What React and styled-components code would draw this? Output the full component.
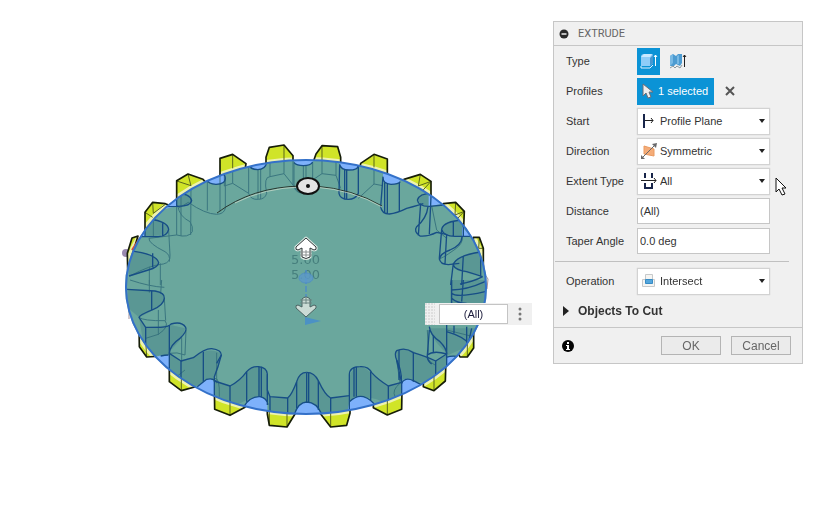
import React from "react";
import styled, { createGlobalStyle } from "styled-components";

const GlobalStyle = createGlobalStyle`
  *, *::before, *::after { box-sizing: border-box; }
  body { margin: 0; background: #fff; }
  body, button, input, select { font-family: "Liberation Sans", Arial, sans-serif; font-size: 11px; color: #333; }
`;

const Workspace = styled.main`
  display: flex;
  align-items: flex-start;
  min-height: 100vh;
  padding-right: 21px;
`;

const Scene = styled.section`
  position: relative;
  flex: 1;
  min-width: 0;
`;

const Drawing = styled.svg`
  display: block;
  width: 100%;
  height: auto;
`;

const ValueBox = styled.div`
  position: absolute;
  left: 425px;
  top: 303px;
  display: flex;
  align-items: center;
  width: 107px;
  height: 22px;
  background: #f0f0f0;
`;

const Grip = styled.span`
  width: 14px;
  height: 22px;
  background: radial-gradient(circle at 1px 1px, #dedede 1px, transparent 1px) 0 0 / 3px 3px;
  border-right: 4px solid #f0f0f0;
`;

const ValueInput = styled.input`
  width: 69px;
  height: 20px;
  padding: 0;
  border: 1px solid #c4c4c4;
  background: #fff;
  text-align: center;
  font-size: 11px;
  color: #1c1c3c;
`;

const MoreButton = styled.button`
  display: flex;
  flex: 1;
  justify-content: center;
  padding: 0;
  border: 0;
  background: none;
`;

const Dialog = styled.form`
  position: relative;
  width: 250px;
  margin-top: 21px;
  border: 1px solid #c6c6c6;
  background: #f0f0f0;
`;

const Header = styled.header`
  display: flex;
  align-items: center;
  gap: 9px;
  height: 24px;
  padding-left: 5px;
  border-bottom: 1px solid #c6c6c6;
`;

const Title = styled.h1`
  margin: 0;
  font-size: 11px;
  font-weight: 400;
  color: #666;
  font-family: Roboto, "Liberation Sans", sans-serif;
`;

const IconButton = styled.button`
  display: flex;
  padding: 0;
  border: 0;
  background: none;
`;

const Row = styled.div`
  display: grid;
  grid-template-columns: 71px 133px;
  align-items: center;
  height: 30px;
  padding-left: 12px;
`;

const Label = styled.label`
  white-space: nowrap;
`;

const Controls = styled.div`
  display: flex;
  align-items: center;
  gap: 6px;
`;

const TypeButton = styled.button`
  display: flex;
  align-items: center;
  justify-content: center;
  width: 23px;
  height: 27px;
  padding: 0;
  border: 0;
  background: ${(p) => (p.$active ? "#0b93d6" : "transparent")};
`;

const SelectionButton = styled.button`
  display: flex;
  align-items: center;
  gap: 4px;
  width: 77px;
  height: 27px;
  padding: 0 0 0 5px;
  border: 0;
  background: #0b93d6;
  color: #fff;
  white-space: nowrap;
`;

const SelectFrame = styled.div`
  position: relative;
  display: flex;
  align-items: center;
  gap: 3px;
  height: 27px;
  padding: 0 4px 0 3px;
  border: 1px solid #d2d2d2;
  background: #fff;
  box-shadow: 0 0 1px #c8c8c8;
`;

const Select = styled.select`
  flex: 1;
  min-width: 0;
  height: 24px;
  padding: 0;
  border: 0;
  outline: 0;
  appearance: none;
  background: transparent;
`;

const TextInput = styled.input`
  width: 100%;
  height: 26px;
  padding: 0 2px;
  border: 1px solid #c6c6c6;
  background: #fff;
`;

const Divider = styled.hr`
  height: 1px;
  margin: 5px 13px 4px 1px;
  border: 0;
  background: #c0c0c0;
`;

const SectionButton = styled.button`
  display: flex;
  align-items: center;
  gap: 8px;
  height: 31px;
  padding: 0 0 2px 9px;
  border: 0;
  background: none;
  font-size: 12px;
  font-weight: 700;
`;

const Footer = styled.footer`
  display: flex;
  align-items: center;
  gap: 10px;
  height: 36px;
  padding: 0 11px 0 8px;
  border-top: 1px solid #c6c6c6;
`;

const Spacer = styled.span`
  flex: 1;
`;

const ActionButton = styled.button`
  width: 60px;
  height: 19px;
  padding: 0;
  border: 1px solid #b4b4b4;
  background: #ebebeb;
  color: #666;
  font-size: 12px;
`;

const Pointer = styled.svg`
  position: absolute;
  left: 221px;
  top: 155px;
`;

/* Each sector is drawn at three units per pixel from its own origin. */
const sectors = [
  {
    at: "translate(110 130) scale(.33333)",
    teeth: [
      "M468 100L468 82L478 52L522 45L549 77V100Z",
      "M330 145V85L368 73L408 101L405 120Z",
      "M200 215V152L234 132L279 148L290 160Z",
      "M105 310V247L128 217L166 221L190 230Z",
      "M53 420L52 370L66 324L84 318Z",
    ],
    edges: ["M522 45V90", "M368 73V115", "M234 132L243 168M200 153L243 167", "M128 217L130 250L166 223M105 247L128 262"],
    patches: [
      "M416 102A27 17 0 0 0 470 98L470 85H416Z",
      "M290 147A28 17 0 0 0 346 145V120Z",
      "M160 238L200 200V229Z",
      "M75 319L105 285V319Z",
    ],
    faces: [
      "M200 190Q245 190 245 212Q240 230 200 228Z",
      "M115 268Q172 275 176 298Q170 320 105 319V290Z",
      "M58 362Q142 375 146 398Q135 415 57 438Z",
    ],
    faint: [
      "M480 90V140L522 131V90M522 131L549 165V90M549 165Q560 188 600 190M480 140Q460 140 470 190Q465 208 445 208Q422 210 416 190L368 160L343 168V85M368 160V110M416 190V105M444 118V207M452 118V207",
      "M346 145V235Q342 252 320 253Q285 252 235 217L205 235M292 150V242M330 135V245M243 168L242 315M203 226Q208 260 240 275Q250 290 247 305Q235 325 200 315L117 325",
      "M130 265V320M176 300L180 375Q182 397 160 402Q120 405 60 438M117 325Q115 340 165 365Q182 375 178 395M151 400V465M118 410V465M200 315V225M213 195V318",
    ],
    blue: [
      "M416 102Q420 119 443 119Q466 119 470 98M290 148Q295 163 318 163Q346 163 346 145Q346 130 330 133V85",
      "M200 190Q240 190 245 212Q242 230 200 229L165 230M200 152V230M118 267Q173 274 176 298Q172 318 145 320H80M105 255V318M58 362Q140 372 146 398Q145 412 115 420L57 438M128 370V412M158 280V318",
    ],
  },
  {
    at: "translate(300 130) scale(.33333)",
    teeth: [
      "M40 95L48 72L66 47L113 50L122 82V105Z",
      "M180 112L182 100L222 73L262 87V140Z",
      "M310 160L312 148L361 133L393 154V220Z",
      "M430 235V221L467 217L493 244L490 315Z",
      "M520 335V322H538L550 355V410Z",
    ],
    edges: ["M66 47V90", "M222 73V112", "M361 133L355 168L393 154M393 154L365 185", "M467 217L465 255L493 244L470 268", "M538 322L536 355L550 355"],
    patches: [
      "M-18 94Q-10 108 10 108Q32 108 38 94V85H-18Z",
      "M119 103Q122 121 147 121Q174 121 175 108V90H119Z",
      "M249 140Q248 163 273 163Q296 163 301 155L290 130H249Z",
      "M386 196L425 222L386 229Z",
      "M486 290L510 318H486Z",
    ],
    faces: [
      "M352 210Q355 190 395 190V228Q360 230 352 210Z",
      "M425 298Q428 275 490 270V319Q430 320 425 298Z",
      "M460 405Q465 380 542 366V435Q465 425 460 405Z",
    ],
    faint: [
      "M-18 95V160Q-20 185 5 190M10 108V155M18 108V155M38 98V150L66 131V90M66 131L108 136L122 175M108 50V136M222 112V162M175 205L222 162L248 167",
      "M395 228L410 300L440 325M487 320Q490 340 465 358Q420 390 418 385",
    ],
    blue: [
      "M-18 98Q-10 107 10 107Q32 107 38 96M119 103Q122 120 147 120Q174 120 174 108M119 103L117 190Q120 208 145 208Q166 208 175 190V108M134 118V207M140 118V207",
      "M249 140Q248 162 273 163Q296 163 301 155M249 140L242 230Q245 252 268 252Q290 250 320 235Q360 225 370 221M254 158V248M262 160V250M298 157V243",
      "M352 210Q358 190 395 190M352 210Q355 230 390 229L430 225M384 230Q380 265 350 290Q340 305 360 318Q385 320 410 307L442 314M362 220L355 317M395 155L388 312",
      "M425 298Q430 273 492 270M425 298Q430 318 465 319H510M425 298L418 385Q420 403 445 404L478 400M440 312L435 402M460 275V319M486 320Q485 345 450 360Q420 370 418 390M490 245V318",
      "M460 405Q465 378 542 366M460 405Q465 420 500 425L548 440M460 400L452 465M490 377L485 465M548 440Q520 455 480 462M542 330V440",
    ],
  },
  {
    at: "translate(110 280) scale(.33333)",
    teeth: [
      "M87 130L88 200L110 231L160 228V160Z",
      "M178 235V305L214 332L265 318V250Z",
      "M313 320L314 388L360 406L405 382V320Z",
      "M472 370V402L478 436L531 441L555 402V370Z",
    ],
    edges: ["M107 180L110 231", "M214 270V332", "M360 350V406", "M478 390V436M531 390V441"],
    patches: [
      "M135 232Q150 225 178 225V265Z",
      "M255 325L290 298Q310 293 313 310V355Z",
      "M395 390Q420 346 452 350Q472 356 472 374V410Z",
    ],
    faces: [
      "M55 28L135 33Q165 40 163 55Q150 85 87 112L50 80Z",
      "M87 112L107 142L183 135L225 145Q225 170 178 215V225L107 230Z",
      "M178 220L213 243L260 226Q300 200 332 220Q330 250 313 300L213 332L178 300Z",
      "M313 303L360 318Q390 300 410 275Q430 255 460 262Q475 280 474 340V375Q440 340 410 360L360 385L313 365Z",
      "M474 340L480 350L533 354Q550 340 558 310Q565 278 590 277V365Q565 370 550 400H476Z",
    ],
    faint: [
      "M118 0V38M155 0L152 40M60 0Q120 20 163 22M145 90V165M163 55L167 122M87 112Q100 123 165 122Q180 140 145 163L107 175",
      "M178 220Q200 215 225 225L228 150M215 170V245M190 300Q205 285 225 270",
      "M313 295Q330 290 328 350M320 218V310",
    ],
    blue: [
      "M50 28L135 33Q165 38 163 55Q160 75 130 88Q88 105 87 112L107 142L152 142Q178 140 183 132Q215 123 227 142Q233 153 210 175Q180 195 178 220L213 243L250 233Q285 205 305 206Q335 210 334 225Q325 260 313 290V303L360 318Q390 303 410 275Q425 258 445 260Q470 262 472 282V330L480 350L533 354Q545 345 560 305Q568 277 590 277",
      "M107 142V230M178 135V225M125 33V90M178 220V305M213 243V332M280 215V305M334 225L320 250M313 303V390M360 318V400M410 275V365M447 260V348M454 260V350M472 282V375M480 350V430M533 354V410M560 305V385M262 320L290 298Q310 293 318 305M400 382Q420 348 450 350Q470 354 474 374M152 228Q165 225 175 225",
    ],
  },
  {
    at: "translate(300 280) scale(.33333)",
    teeth: [
      "M55 390L62 402L92 441L140 436L150 400V370Z",
      "M220 350V383L262 405L305 388L306 330Z",
      "M370 300V320L402 332L436 303L438 235Z",
      "M470 210L480 231H502L521 204V160Z",
    ],
    edges: ["M92 390V441", "M262 360V405", "M402 280V332", "M502 190V231"],
    patches: [
      "M-22 415Q-8 367 20 366Q50 367 65 410Z",
      "M140 405L148 368Q165 345 190 350Q215 358 238 385Z",
      "M304 358V305Q315 290 335 300L385 322Z",
      "M438 270V230Q450 225 490 234Z",
    ],
    faces: [
      "M20 277Q45 277 60 305Q75 340 92 354L145 348V400H65Q50 367 20 366Z",
      "M148 290Q155 260 190 260Q215 280 235 295L265 318L305 305L304 385L262 375Q215 340 150 360Z",
      "M285 215Q315 195 350 220L407 243L440 225V280L380 310L310 300Z",
      "M388 145H525L500 200L445 225Q395 180 388 145Z",
      "M450 0H560V70H450Z",
    ],
    faint: [
      "M290 240L300 310Q275 330 285 350M382 150L385 215Q375 240 405 255M440 150Q480 160 520 170",
    ],
    blue: [
      "M20 277Q43 277 55 302Q75 345 92 354L148 347V285Q148 260 180 260Q205 258 215 278Q235 300 265 318L305 307Q305 270 290 240Q282 220 290 212Q315 200 340 218Q380 230 407 243L440 222Q440 205 420 185Q390 165 388 140",
      "M92 354V435M148 345V405M55 302V390M20 278V367M26 279V368M162 262V350M169 260V350M212 275V360M265 318V395M305 307V385M290 240L305 310M297 210V300M340 218V305M407 243V325M440 135V280M388 150L382 225Q380 240 395 252M400 165V220M382 225Q400 210 440 222M462 137V160M440 155Q490 170 505 190L515 145M500 140V190M438 232Q460 225 480 231",
      "M455 0V70M490 0L485 65M455 30Q500 30 555 5M455 40Q470 55 555 35M455 55Q470 70 500 70M-18 405Q-5 367 20 366Q50 367 65 402M148 365Q170 345 190 350Q215 358 230 382M305 310Q315 290 340 302L375 320",
    ],
  },
];

const paths = (list) => list.map((d) => <path key={d} d={d} />);

const upArrow = "M306 238L316 247Q317 250 314 250L310 248V257Q306 260 302 257V248L298 250Q295 250 296 247Z";
const downArrow = "M306 317L316 308Q317 305 314 305L310 307V299Q306 295 302 299V307L298 305Q295 305 296 308Z";

function GearDrawing() {
  const layer = (key) =>
    sectors.map((s) => (
      <g key={s.at} transform={s.at}>
        {paths(s[key])}
      </g>
    ));
  return (
    <Drawing viewBox="0 0 553 506" role="img" aria-label="Gear body with extrude preview">
      <defs>
        <clipPath id="disc">
          <ellipse cx="306" cy="287" rx="180" ry="127" />
        </clipPath>
        <clipPath id="teeth">
          {sectors.flatMap((s) => s.teeth.map((d) => <path key={s.at + d} d={d} transform={s.at} />))}
        </clipPath>
      </defs>
      <circle cx="126" cy="253" r="4" fill="#806b9c" opacity=".8" />
      <g fill="#d0e428">{layer("teeth")}</g>
      <ellipse cx="306" cy="287" rx="182" ry="128" fill="none" stroke="#eef2b0" strokeWidth="4" clipPath="url(#teeth)" />
      <g fill="none" stroke="#59661c" strokeWidth="3">{layer("edges")}</g>
      <g fill="none" stroke="#161d08" strokeWidth="5" strokeLinejoin="round">{layer("teeth")}</g>
      <path d="M132 250l8-12" stroke="#d8453a" strokeWidth="2" />
      <path d="M486 276l2 3-1 10M129 285v34" stroke="#a7929a" strokeWidth="1" fill="none" />
      <ellipse cx="306" cy="287" rx="181" ry="127" fill="#6aa79d" />
      <g clipPath="url(#disc)">
        <g fill="#457f87" opacity=".4">{layer("faces")}</g>
        <g fill="#7eb1fb">{layer("patches")}</g>
        <g fill="none" stroke="#35707c" strokeWidth="3" opacity=".9">{layer("faint")}</g>
        <g fill="none" stroke="#174e86" strokeWidth="4" strokeLinejoin="round">{layer("blue")}</g>
      </g>
      <ellipse cx="306" cy="287" rx="180" ry="127" fill="none" stroke="#3471c9" strokeWidth="2" />

      <path d="M217 213Q252 187 301 186" fill="none" stroke="#29372f" strokeWidth="1" />
      <path d="M315 186Q353 189 382 206" fill="none" stroke="#29372f" strokeWidth="1" />
      <path d="M235 203Q264 188 301 187M315 187Q353 190 382 207" fill="none" stroke="#e2e8d5" strokeWidth="1" opacity=".6" />
      <ellipse cx="308" cy="186" rx="11" ry="8" fill="#e5e5e5" stroke="#111" strokeWidth="2" />
      <circle cx="308" cy="186" r="2" fill="#111" />

      <g fill="#467f7d" fontFamily="DejaVu Sans" fontSize="13">
        <text x="291" y="264">5.00</text>
        <text x="291" y="279">5.00</text>
      </g>
      <path d="M306 270V303" stroke="#4d8bc8" strokeWidth="2" strokeDasharray="6 2" opacity=".7" />
      <ellipse cx="306" cy="278" rx="7" ry="5" fill="#5c99cb" stroke="#4d8bc8" opacity=".8" />
      <path d="M305 317L321 321L305 325Z" fill="#4b91c5" />
      <g strokeLinejoin="round">
        <path d={upArrow} fill="none" stroke="#d9e6e0" strokeWidth="3" />
        <path d={upArrow} fill="#fff" stroke="#30383a" />
        <path d="M300 252H312M300 255H312M306 250V257" fill="none" stroke="#8a9090" />
        <path d={downArrow} fill="#cadbd5" stroke="#4b6362" />
        <path d="M300 300H312M300 303H312M306 298V304" fill="none" stroke="#6d8582" />
      </g>
    </Drawing>
  );
}

const Arrow = () => (
  <svg width="6" height="4" viewBox="0 0 6 4" aria-hidden="true">
    <path d="M0 0H6L3 4Z" fill="#222" />
  </svg>
);

const CursorShape = ({ width, fill, stroke }) => (
  <svg width={width} height="17" viewBox="0 0 12 17" aria-hidden="true">
    <path d="M1 1V13L4 10L6 15L9 14L7 9H11Z" fill={fill} stroke={stroke} />
  </svg>
);

const ExtrudeIcon = () => (
  <svg width="19" height="19" viewBox="0 0 19 19" aria-hidden="true">
    <path d="M2 5Q2 2 5 2H13Q14 2 14 4V11L11 14H2Z" fill="#8fcdf8" />
    <path d="M11 6L14 3V11L11 14Z" fill="#4697d1" />
    <path d="M2 5L5 2H13L11 5Z" fill="#c9e9ff" />
    <path d="M2 14V16H11L14 13" fill="none" stroke="#dff2ff" />
    <path d="M16.5 14V3M15 5L16.5 3L18 5" fill="none" stroke="#fff" />
  </svg>
);

const ThinIcon = () => (
  <svg width="19" height="19" viewBox="0 0 19 19" aria-hidden="true">
    <path d="M2 4L5 2L8 4L10 2H14V11L12 14L8 12L6 14H2Z" fill="#4c9bd1" />
    <path d="M2 4L5 2V11L2 14ZM9 4L11 3V12L9 12Z" fill="#78b9e4" />
    <path d="M2 16L5 14L7 16L9 14L12 16L14 13" fill="none" stroke="#8b989f" />
    <path d="M16.5 15V3M15 5L16.5 3L18 5" fill="none" stroke="#202020" />
  </svg>
);

const PlaneIcon = () => (
  <svg width="16" height="18" viewBox="0 0 16 18" aria-hidden="true">
    <path d="M3 2V16" stroke="#18254a" strokeWidth="2" />
    <path d="M4 8.5H12M10 6L12 8.5L10 11" fill="none" stroke="#222" />
  </svg>
);

const SymmetricIcon = () => (
  <svg width="16" height="18" viewBox="0 0 16 18" aria-hidden="true">
    <path d="M3 4L13 7V14L3 12Z" fill="#f5ac78" stroke="#e99a61" />
    <path d="M1 16L15 2" fill="none" stroke="#68696b" strokeWidth="1" />
    <path d="M11 2L16 1L15 6ZM0 13V17H4Z" fill="#68696b" />
  </svg>
);

const ThroughIcon = () => (
  <svg width="16" height="18" viewBox="0 0 16 18" aria-hidden="true">
    <path d="M4 1V6M11 1V6M4 11V16H11V11" fill="none" stroke="#18254a" strokeWidth="2" />
    <path d="M0 8.5H15M13 6L15 8.5L13 11" fill="none" stroke="#222" />
  </svg>
);

const IntersectIcon = () => (
  <svg width="16" height="18" viewBox="0 0 16 18" aria-hidden="true">
    <path d="M4.5 2.5H11.5V7.5H4.5ZM1.5 7.5H13.5V14.5H1.5Z" fill="#f5f5f3" stroke="#c7c9ca" />
    <path d="M4.5 7.5H11.5V11.5H4.5Z" fill="#54a6dc" stroke="#368bc5" />
  </svg>
);

function SelectRow({ id, label, value, children }) {
  return (
    <Row>
      <Label htmlFor={id}>{label}</Label>
      <SelectFrame>
        {children}
        <Select id={id} defaultValue={value}>
          <option>{value}</option>
        </Select>
        <Arrow />
      </SelectFrame>
    </Row>
  );
}

function TextRow({ id, label, value }) {
  return (
    <Row>
      <Label htmlFor={id}>{label}</Label>
      <TextInput id={id} defaultValue={value} />
    </Row>
  );
}

export default function App() {
  return (
    <>
      <GlobalStyle />
      <Workspace>
        <Scene>
          <GearDrawing />
          <ValueBox>
            <Grip />
            <ValueInput aria-label="Extent value" defaultValue="(All)" />
            <MoreButton type="button" aria-label="More options">
              <svg width="4" height="14" viewBox="0 0 4 14" fill="#777">
                <circle cx="2" cy="2" r="1.5" />
                <circle cx="2" cy="7" r="1.5" />
                <circle cx="2" cy="12" r="1.5" />
              </svg>
            </MoreButton>
          </ValueBox>
        </Scene>
        <Dialog onSubmit={(e) => e.preventDefault()}>
          <Header>
            <IconButton type="button" aria-label="Collapse">
              <svg width="10" height="10" viewBox="0 0 10 10">
                <circle cx="5" cy="5" r="4.5" fill="#292929" />
                <path d="M2.5 5H7.5" stroke="#eee" strokeWidth="1.5" />
              </svg>
            </IconButton>
            <Title>EXTRUDE</Title>
          </Header>
          <Row>
            <Label as="span">Type</Label>
            <Controls>
              <TypeButton type="button" $active aria-label="Extrude"><ExtrudeIcon /></TypeButton>
              <TypeButton type="button" aria-label="Thin extrude"><ThinIcon /></TypeButton>
            </Controls>
          </Row>
          <Row>
            <Label as="span">Profiles</Label>
            <Controls>
              <SelectionButton type="button">
                <CursorShape width="12" fill="#eee" stroke="#6d6d76" />
                1 selected
              </SelectionButton>
              <IconButton type="button" aria-label="Clear selection">
                <svg width="20" height="10" viewBox="0 0 20 10">
                  <path d="M6 1L14 9M14 1L6 9" stroke="#555" strokeWidth="2" />
                </svg>
              </IconButton>
            </Controls>
          </Row>
          <SelectRow id="start" label="Start" value="Profile Plane"><PlaneIcon /></SelectRow>
          <SelectRow id="direction" label="Direction" value="Symmetric"><SymmetricIcon /></SelectRow>
          <SelectRow id="extent" label="Extent Type" value="All"><ThroughIcon /></SelectRow>
          <TextRow id="distance" label="Distance" value="(All)" />
          <TextRow id="taper" label="Taper Angle" value="0.0 deg" />
          <Divider />
          <SelectRow id="operation" label="Operation" value="Intersect"><IntersectIcon /></SelectRow>
          <SectionButton type="button" aria-expanded="false">
            <svg width="7" height="10" viewBox="0 0 7 10" aria-hidden="true">
              <path d="M0 0L6 5L0 10Z" fill="#222" />
            </svg>
            Objects To Cut
          </SectionButton>
          <Footer>
            <IconButton type="button" aria-label="Information">
              <svg width="12" height="12" viewBox="0 0 12 12">
                <circle cx="6" cy="6" r="6" fill="#050505" />
                <path d="M5 2H7V4H5ZM4 5H7V9H8V10H4V9H5V6H4Z" fill="#fff" />
              </svg>
            </IconButton>
            <Spacer />
            <ActionButton type="submit">OK</ActionButton>
            <ActionButton type="button">Cancel</ActionButton>
          </Footer>
          <Pointer width="14" height="20" viewBox="0 0 14 20" aria-hidden="true">
            <path d="M1 1V15L4 12L7 18L10 17L7 11H11Z" fill="#fff" stroke="#111" />
          </Pointer>
        </Dialog>
      </Workspace>
    </>
  );
}
